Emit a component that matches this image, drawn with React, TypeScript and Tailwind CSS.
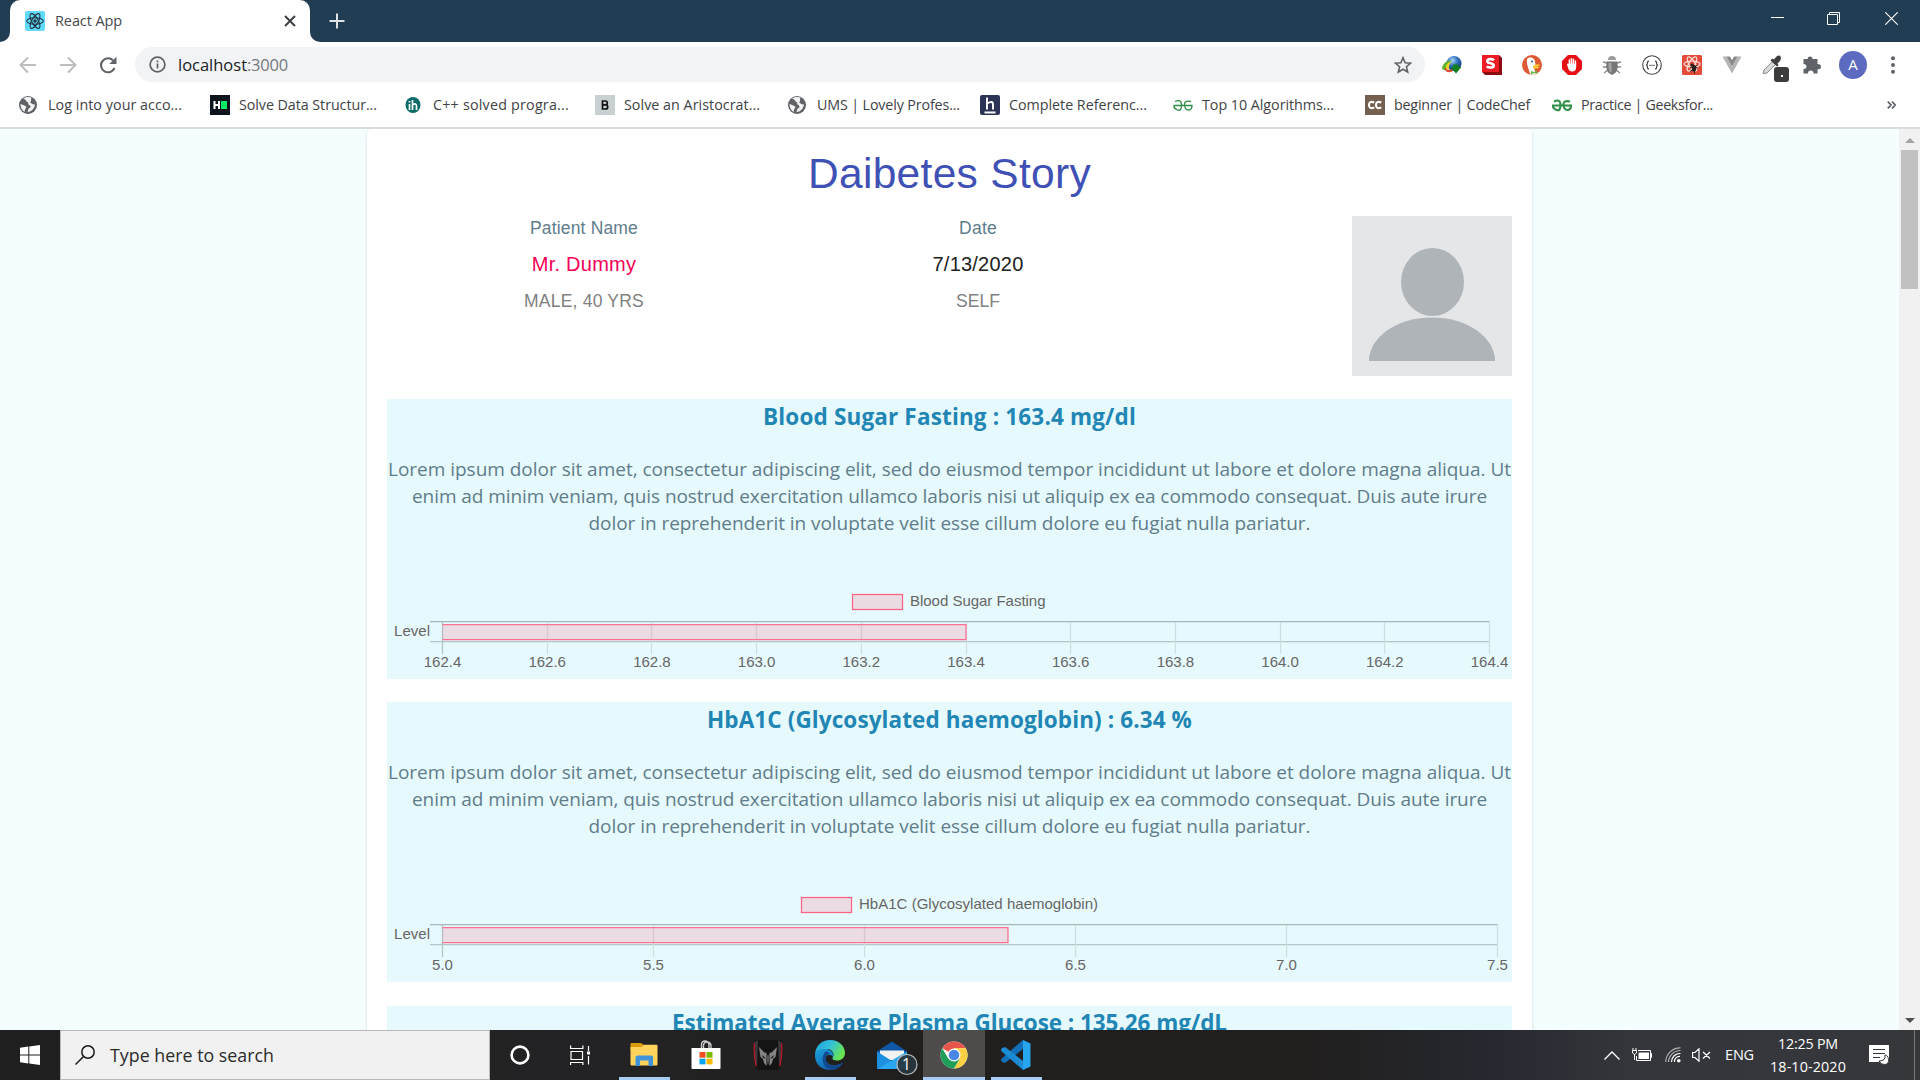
import React, { useLayoutEffect, useRef } from "react";

const UI = "font-['Open_Sans','Noto_Sans',sans-serif]";
const ARIAL = "font-['Liberation_Sans',Arial,sans-serif]";

/* One line of text whose tracking is adjusted so it spans exactly `w` pixels. */
function Fit({ w, className = "", children }: { w: number; className?: string; children: string }) {
  const ref = useRef<HTMLSpanElement>(null);
  useLayoutEffect(() => {
    const el = ref.current;
    if (!el) return;
    el.style.letterSpacing = "0px";
    const natural = el.getBoundingClientRect().width;
    el.style.letterSpacing = `${(w - natural) / children.length}px`;
  }, [w, children]);
  return (
    <span ref={ref} className={`inline-block whitespace-nowrap ${className}`}>
      {children}
    </span>
  );
}

function ReactMark({ stroke, className }: { stroke: string; className: string }) {
  return (
    <svg viewBox="0 0 20 20" className={className} fill="none" stroke={stroke}>
      <ellipse cx="10" cy="10" rx="8.3" ry="3.2" strokeWidth="1.1" />
      <ellipse cx="10" cy="10" rx="8.3" ry="3.2" strokeWidth="1.1" transform="rotate(60 10 10)" />
      <ellipse cx="10" cy="10" rx="8.3" ry="3.2" strokeWidth="1.1" transform="rotate(120 10 10)" />
      <circle cx="10" cy="10" r="1.7" fill={stroke} stroke="none" />
    </svg>
  );
}

function TitleBar() {
  return (
    <div className="flex h-[42px] bg-[#213d54]">
      <div className="flex w-[320px] items-end">
        <svg viewBox="0 0 10 10" className="h-[10px] w-[10px] fill-white"><path d="M10 0V10H0A10 10 0 0 0 10 0Z" /></svg>
        <div className="flex h-[42px] w-[300px] items-center rounded-t-[10px] bg-white pl-[15px]">
          <span className="flex h-5 w-5 items-center justify-center rounded-[2px] bg-[#61dafb]">
            <ReactMark stroke="#20303c" className="h-5 w-5" />
          </span>
          <Fit w={67} className={`ml-[10px] text-[14.5px] text-[#45494d] ${UI}`}>React App</Fit>
          <svg viewBox="0 0 12 12" className="ml-[162px] h-3 w-3" stroke="#3c4043" strokeWidth="2"><path d="M1 1L11 11M11 1L1 11" /></svg>
        </div>
        <svg viewBox="0 0 10 10" className="h-[10px] w-[10px] fill-white"><path d="M0 0V10H10A10 10 0 0 1 0 0Z" /></svg>
      </div>
      <svg viewBox="0 0 16 16" className="ml-[9px] mt-[13px] h-4 w-4" stroke="#dfe3e6" strokeWidth="2"><path d="M8 .5V15.5M.5 8H15.5" /></svg>
      <div className="ml-auto flex pt-[12px]">
        <svg viewBox="0 0 13 13" className="mr-[43px] h-[13px] w-[13px]" stroke="#fff" strokeWidth="1"><path d="M0 5.5H13" /></svg>
        <svg viewBox="0 0 13 13" className="mr-[45px] h-[13px] w-[13px]" fill="none" stroke="#fff" strokeWidth="1"><path d="M.5 2.5H10.5V12.5H.5ZM2.5 2.5V.5H12.5V10.5H10.5" /></svg>
        <svg viewBox="0 0 13 13" className="mr-[22px] h-[13px] w-[13px]" stroke="#fff" strokeWidth="1.1"><path d="M.3 .3L12.7 12.7M12.7 .3L.3 12.7" /></svg>
      </div>
    </div>
  );
}

const EXTENSIONS: React.ReactNode[] = [
  <>
    <defs>
      <radialGradient id="idmGlobe" cx=".4" cy=".3" r=".7"><stop offset="0" stopColor="#a8d8f8" /><stop offset=".5" stopColor="#2f6fc0" /><stop offset="1" stopColor="#143a78" /></radialGradient>
    </defs>
    <circle cx="12" cy="8.500" r="7.5" fill="url(#idmGlobe)" />
    <path d="M0 13C1 8 5 5 10 5.500C6 7 4 10 4.500 14.500C2.500 15.500 0 15 0 13Z" fill="#5cb531" />
    <path d="M4 14C3.500 9.500 6 7 10 6.500C7.500 8.500 6.500 11 7 14Z" fill="#f5d21d" />
    <path d="M2.500 14C4 17.500 8 18 11 16L9 14C7 15.500 5 15 4 13Z" fill="#e34a2a" />
    <path d="M8.500 12H11V9.500H16.500V12H19.500L14 18.500Z" fill="#13801c" />
  </>,
  <>
    <path d="M0 0H17L20 3V20H3L0 17Z" fill="#8c0d10" />
    <rect width="17" height="17" fill="#ec1c24" />
    <path d="M12 5.2C11 3.9 5.3 3.3 5.3 6.2C5.3 9.2 11.7 7.4 11.7 10.4C11.7 13.4 6 12.8 4.8 11.2" fill="none" stroke="#fff" strokeWidth="2.6" />
  </>,
  <>
    <circle cx="10" cy="10" r="10" fill="#de5833" />
    <path d="M5 4C8 1 13 3 13 7C14 9 13 11 12 13L14 19C11 20 9 20 8 19C7 14 4 9 5 4Z" fill="#fff" />
    <circle cx="10" cy="6.5" r="1" fill="#2d4f8e" />
    <path d="M11 11C14 9 17 9 18 10L15 11.5L18 12C16 14 13 14 11 13Z" fill="#fc3" />
    <path d="M9 16L12 17L15 15.5V19L12 18L9 19.5Z" fill="#67bd47" />
  </>,
  <>
    <path d="M6 0H14L20 6V14L14 20H6L0 14V6Z" fill="#e60f13" />
    <path d="M5 9.5Q5 8.6 5.8 8.6T6.6 9.5V5Q6.6 4.2 7.3 4.2T8.1 5V8.5H8.6V3.8Q8.6 3 9.4 3T10.2 3.8V8.5H10.7V4.3Q10.7 3.6 11.4 3.6T12.2 4.3V9H12.7V6Q12.7 5.3 13.4 5.3T14.2 6V12Q14.2 16.5 10 16.5Q7.5 16.5 6.4 14Z" fill="#fff" />
  </>,
  <>
    <path d="M1 7L5 8M15 8L19 7M1 12H19M2 18L6 15M18 18L14 15" stroke="#8b8b8b" strokeWidth="1.4" />
    <path d="M6 5Q6 1 10 1T14 5Z" fill="#9b9b9b" />
    <path d="M4.5 6.5H15.5Q17 18 10 20Q3 18 4.5 6.5Z" fill="#777" />
    <path d="M6.5 8H9.5V18Q6 16 6.5 8Z" fill="#a5a5a5" />
  </>,
  <>
    <circle cx="10" cy="10" r="9.3" fill="#fff" stroke="#444" strokeWidth="1.1" />
    <path d="M7 6.2Q5.4 6.2 5.4 8T4.2 10Q5.4 10 5.4 12T7 13.8M13 6.2Q14.6 6.2 14.6 8T15.8 10Q14.6 10 14.6 12T13 13.8" fill="none" stroke="#444" strokeWidth="1.3" />
    <path d="M7.4 10.3H8.6M9.4 10.3H10.6M11.4 10.3H12.6" stroke="#444" strokeWidth="1.2" />
  </>,
  <>
    <rect width="20" height="20" rx="1.5" fill="#e34a38" />
    <g fill="none" stroke="#f6dcd8" strokeWidth="1.2">
      <ellipse cx="10" cy="9" rx="8" ry="3" />
      <ellipse cx="10" cy="9" rx="8" ry="3" transform="rotate(60 10 9)" />
      <ellipse cx="10" cy="9" rx="8" ry="3" transform="rotate(120 10 9)" />
    </g>
    <path d="M10 9L15.500 13.500M8 12.500L15.500 10.500M8 16.500L14 13M12.500 18.500L12.500 12" stroke="#221" strokeWidth="1" />
    <ellipse cx="12" cy="13.500" rx="2.200" ry="3.200" fill="#2b1b1a" />
    <circle cx="10" cy="10" r="1.600" fill="#2b1b1a" />
  </>,
  <>
    <path d="M.5 1.5H4.3L10 11.5L15.700 1.500H19.5L10 18.500Z" fill="#b4b4b4" />
    <path d="M4.300 1.500H8L10 5L12 1.500H15.700L10 11.500Z" fill="#8a8a8a" />
  </>,
  <>
    <path d="M1 18.500L2 15L10.500 6.500L13.500 9.500L5 18Z" fill="#d5d8d8" stroke="#8c8f8f" strokeWidth="1" />
    <path d="M10 3.500L12 4.500L14.500 1.500Q17.500 -.5 18.500 1.500T18 6L15.500 8.500L16.500 10.500L15 11.500L8.500 5.500Z" fill="#3d3d3d" />
  </>,
  <path d="M8 1.500Q10.500 1.500 10.500 4H15.500V9Q19 9 19 11.700T15.500 14.200V18.500H11.500Q11.500 15.500 8.700 15.500T6 18.500H1.500V14Q4.500 14 4.500 11.500T1.500 9V4H5.700Q5.500 1.500 8 1.500Z" fill="#5f6368" />,
];

function Toolbar() {
  return (
    <div className="flex h-[45px] items-center bg-white">
      <svg viewBox="0 0 18 18" className="ml-[19px] h-[18px] w-[18px]" fill="none" stroke="#bcbec0" strokeWidth="2"><path d="M17 9H2M9 1.500L1.500 9L9 16.500" /></svg>
      <svg viewBox="0 0 18 18" className="ml-[22px] h-[18px] w-[18px]" fill="none" stroke="#bcbec0" strokeWidth="2"><path d="M1 9H16M9 1.500L16.500 9L9 16.500" /></svg>
      <svg viewBox="0 0 18 18" className="ml-[22px] h-[18px] w-[18px]" fill="none" stroke="#5f6368" strokeWidth="2.100"><path d="M15.500 12A7 7 0 1 1 14 4.300" /><path d="M17.500 .8V8H10.300Z" fill="#5f6368" stroke="none" /></svg>
      <div className="ml-[18px] flex h-[35px] w-[1290px] items-center rounded-full bg-[#f1f3f4] pl-[14px]">
        <svg viewBox="0 0 18 18" className="h-[17px] w-[17px]" fill="none" stroke="#5f6368" strokeWidth="1.800"><circle cx="9" cy="9" r="7.800" /><path d="M9 8V13.200M9 4.700V6.500" /></svg>
        <Fit w={69} className={`ml-[12px] mt-px text-[16.500px] text-[#202124] ${UI}`}>localhost</Fit>
        <Fit w={41} className={`mt-px text-[16.500px] text-[#75797d] ${UI}`}>:3000</Fit>
        <svg viewBox="0 0 18 18" className="ml-[1106px] h-[18px] w-[18px]" fill="none" stroke="#5f6368" strokeWidth="1.600"><path d="M9 1.700L11.100 6.700L16.600 7.100L12.400 10.700L13.700 16L9 13.200L4.300 16L5.600 10.700L1.400 7.100L6.900 6.700Z" /></svg>
      </div>
      <div className="ml-[17px] flex items-center gap-[20px]">
        {EXTENSIONS.map((art, i) => (
          <span key={i} className="relative">
            <svg viewBox="0 0 20 20" className="block h-5 w-5">{art}</svg>
            {i === 8 && (
              <span className="absolute left-[12px] top-[12px] flex h-[15px] w-[15px] items-center justify-center rounded-[3px] bg-[#3c3c3c]">
                <span className="mt-[4px] h-[2px] w-[2px] bg-white" />
              </span>
            )}
          </span>
        ))}
      </div>
      <span className={`ml-[17px] flex h-7 w-7 items-center justify-center rounded-full bg-[#5c6bc0] text-[15px] text-white ${UI}`}>A</span>
      <svg viewBox="0 0 4 18" className="ml-[24px] h-[18px] w-[4px] fill-[#5f6368]"><circle cx="2" cy="2.300" r="2" /><circle cx="2" cy="9" r="2" /><circle cx="2" cy="15.700" r="2" /></svg>
    </div>
  );
}

const globe = (
  <>
    <circle cx="9" cy="10" r="9" fill="#5f6368" />
    <path d="M4 3.500C8 5 7 7 9.500 7.500C8 10 12 9.500 11.500 12.500C10 13 9 14 8.500 17C12 17 15.500 13.500 16 9.500C13.500 10 12.500 8 11 7.500C13 6 11.500 3.500 12.500 2.500C9.500 1.500 6 2 4 3.500Z" fill="#fff" opacity=".92" />
    <path d="M1.500 9C4 10 7 10.500 7.500 12.500C6 13.500 6 15 5.500 17C3 15.500 1.500 12.500 1.500 9Z" fill="#fff" opacity=".92" />
  </>
);
const gfg = (w: number) => (
  <path d="M2 6.500Q8.500 3.500 8.500 10T4.500 15T1 10.500H19Q19 15 15.500 15T11.500 10T18 6.500" fill="none" stroke="#2f8d46" strokeWidth={w} />
);
const BOOKMARKS: { x: string; w: number; label: string; art: React.ReactNode }[] = [
  { x: "w-[191px]", w: 134, label: "Log into your acco...", art: globe },
  { x: "w-[194px]", w: 138, label: "Solve Data Structur...", art: <><rect width="20" height="20" fill="#0e141e" /><path d="M4.500 6V14M9 6V14M4.500 10H9" stroke="#fff" strokeWidth="2" /><rect x="11" y="6" width="6" height="8" fill="#00ea64" /></> },
  { x: "w-[191px]", w: 136, label: "C++ solved progra...", art: <><ellipse cx="9" cy="10" rx="7.500" ry="8" fill="#0b6b68" /><path d="M5.500 15V9M5.500 6V7.500M8.500 15V5M8.500 10Q12.500 7.500 12.500 11V15" fill="none" stroke="#fff" strokeWidth="1.700" /></> },
  { x: "w-[193px]", w: 136, label: "Solve an Aristocrat...", art: <><rect width="20" height="20" fill="#c8d0d2" /><path d="M7.500 6V14H10.500Q12.700 14 12.700 12T10.700 9.900H8H10.300Q12.300 9.900 12.300 8T10.500 6Z" fill="none" stroke="#111" strokeWidth="1.700" /></> },
  { x: "w-[192px]", w: 143, label: "UMS | Lovely Profes...", art: globe },
  { x: "w-[193px]", w: 138, label: "Complete Referenc...", art: <><rect width="20" height="20" rx="2" fill="#2b3454" /><path d="M7 2.500V14.500M7 8.500Q13 5 13 9.500V14.500M4.500 17.500H15.500" fill="none" stroke="#fff" strokeWidth="1.900" /></> },
  { x: "w-[192px]", w: 132, label: "Top 10 Algorithms...", art: gfg(1.3) },
  { x: "w-[187px]", w: 136, label: "beginner | CodeChef", art: <><rect width="20" height="20" fill="#75604f" /><path d="M9.300 7.500Q4 5.500 4 10T9.300 12.500M16.300 7.500Q11 5.500 11 10T16.300 12.500" fill="none" stroke="#fff" strokeWidth="2.200" /></> },
  { x: "w-[192px]", w: 132, label: "Practice | Geeksfor...", art: gfg(2.100) },
];

function BookmarkBar() {
  return (
    <div className="flex h-[42px] items-center border-b-2 border-[#dadce0] bg-white pb-[4px] pl-[19px]">
      {BOOKMARKS.map((b) => (
        <div key={b.label} className={`flex shrink-0 items-center ${b.x}`}>
          <svg viewBox="0 0 20 20" className="h-5 w-5">{b.art}</svg>
          <Fit w={b.w} className={`ml-[9px] text-[14.300px] leading-5 text-[#3f4347] ${UI}`}>{b.label}</Fit>
        </div>
      ))}
      <svg viewBox="0 0 9 8" className="ml-[143px] h-[8px] w-[9px]" fill="none" stroke="#5f6368" strokeWidth="1.700"><path d="M.7 .7L4 4L.7 7.300M5 .7L8.300 4L5 7.300" /></svg>
    </div>
  );
}

interface Chart {
  label: string;
  labelWidth: number;
  legendX: number;
  ticks: string[];
  end: number;
  value: number;
}

interface Metric {
  title: string;
  titleWidth: number;
  chart?: Chart;
}

const METRICS: Metric[] = [
  {
    title: "Blood Sugar Fasting : 163.4 mg/dl",
    titleWidth: 373,
    chart: { label: "Blood Sugar Fasting", labelWidth: 135.500, legendX: 465.500, ticks: ["162.4", "162.6", "162.8", "163.0", "163.2", "163.4", "163.6", "163.8", "164.0", "164.2", "164.4"], end: 1102.500, value: 0.5 },
  },
  {
    title: "HbA1C (Glycosylated haemoglobin) : 6.34 %",
    titleWidth: 485,
    chart: { label: "HbA1C (Glycosylated haemoglobin)", labelWidth: 239, legendX: 414.500, ticks: ["5.0", "5.5", "6.0", "6.5", "7.0", "7.5"], end: 1110.500, value: 0.536 },
  },
  { title: "Estimated Average Plasma Glucose : 135.26 mg/dL", titleWidth: 555 },
];

function LevelChart({ m }: { m: Chart }) {
  const x0 = 55.500;
  const step = (m.end - x0) / (m.ticks.length - 1);
  const barEnd = x0 + (m.end - x0) * m.value;
  return (
    <svg viewBox="0 0 1125 99" className={`mt-[43px] h-[99px] w-[1125px] shrink-0 text-[15px] ${ARIAL}`} fill="#666">
      <rect x={m.legendX} y="14.500" width="50" height="15" fill="#ff6384" fillOpacity=".2" stroke="#ff6384" strokeWidth="1.250" />
      <text x={m.legendX + 57.500} y="26" textLength={m.labelWidth}>{m.label}</text>
      <text x="7" y="55.500" textLength="36">Level</text>
      <path d={`M43 41.500H${m.end}`} stroke="#a6b8ba" strokeWidth="1.250" />
      <path d={`M43 61.500H${m.end}`} stroke="#b4c6c8" strokeWidth="1.250" />
      {m.ticks.map((t, i) => (
        <g key={t}>
          <path d={`M${Math.floor(x0 + i * step) + 0.500} 42V74`} stroke={i ? "#cfdfe1" : "#b0c3c5"} strokeWidth="1.200" />
          <text x={x0 + i * step} y="87" textAnchor="middle">{t}</text>
        </g>
      ))}
      <rect x={x0} y="44" width={barEnd - x0} height="16" fill="#ff6384" fillOpacity=".2" />
      <path d={`M${x0} 44.500H${barEnd}V59.500H${x0}`} fill="none" stroke="#fb7090" strokeWidth="1.250" />
    </svg>
  );
}

function MetricSection({ m }: { m: Metric }) {
  return (
    <section className="mb-[23.900px] flex h-[279.500px] flex-col items-center bg-[#e6f9fc]">
      <h3 className={`mt-[1.500px] text-[22.500px] font-bold leading-[31px] text-[#1f86b5] ${UI}`}>
        <Fit w={m.titleWidth}>{m.title}</Fit>
      </h3>
      {m.chart && (
        <>
          <div className={`mt-[24.500px] flex flex-col items-center text-[19px] leading-[27px] text-[#607d8b] ${UI}`}>
            <Fit w={1123}>Lorem ipsum dolor sit amet, consectetur adipiscing elit, sed do eiusmod tempor incididunt ut labore et dolore magna aliqua. Ut</Fit>
            <Fit w={1075}>enim ad minim veniam, quis nostrud exercitation ullamco laboris nisi ut aliquip ex ea commodo consequat. Duis aute irure</Fit>
            <Fit w={722}>dolor in reprehenderit in voluptate velit esse cillum dolore eu fugiat nulla pariatur.</Fit>
          </div>
          <LevelChart m={m.chart} />
        </>
      )}
    </section>
  );
}

function Page() {
  return (
    <div className="flex h-[901px] overflow-hidden bg-[#f5feff]">
      <main className="ml-[367px] h-[1300px] w-[1165px] shrink-0 rounded-[5px] bg-white px-5 shadow-[0_1px_3px_rgba(0,0,0,0.17)]">
        <h1 className={`h-[87px] pt-[19px] text-center text-[42.500px] leading-[52px] text-[#3f51b5] ${ARIAL}`}>
          <Fit w={283}>Daibetes Story</Fit>
        </h1>
        <div className={`flex h-[183px] ${ARIAL}`}>
          <div className="flex w-[394px] flex-col items-center">
            <Fit w={108} className="text-[17.500px] leading-[24px] text-[#607d8b]">Patient Name</Fit>
            <Fit w={104.500} className="mt-[10.500px] text-[20px] leading-[26px] text-[#f50057]">Mr. Dummy</Fit>
            <Fit w={120} className="mt-[12px] text-[17.500px] leading-[24px] text-[#808080]">MALE, 40 YRS</Fit>
          </div>
          <div className="flex w-[394px] flex-col items-center">
            <Fit w={38} className="text-[17.500px] leading-[24px] text-[#607d8b]">Date</Fit>
            <Fit w={91} className="mt-[10.500px] text-[20px] leading-[26px] text-[#212121]">7/13/2020</Fit>
            <Fit w={44} className="mt-[12px] text-[17.500px] leading-[24px] text-[#808080]">SELF</Fit>
          </div>
          <svg viewBox="0 0 160 160" className="ml-auto h-40 w-40 bg-[#e4e6e8]" fill="#aeb4b8">
            <ellipse cx="80.500" cy="66" rx="31.500" ry="34" />
            <path d="M17 145A63 43.500 0 0 1 143 145Z" />
          </svg>
        </div>
        {METRICS.map((m) => (
          <MetricSection key={m.title} m={m} />
        ))}
      </main>
      <div className="ml-auto flex w-[21px] flex-col items-center bg-[#f1f1f1]">
        <svg viewBox="0 0 10 5" className="mt-[9px] h-[5px] w-[10px] fill-[#a3a3a3]"><path d="M5 0L10 5H0Z" /></svg>
        <div className="mt-[7px] h-[139px] w-[17px] bg-[#c1c1c1]" />
        <svg viewBox="0 0 10 5" className="mb-[7px] mt-auto h-[5px] w-[10px] fill-[#505050]"><path d="M0 0H10L5 5Z" /></svg>
      </div>
    </div>
  );
}

function TaskbarApp({ line = "", active = false, children }: { line?: string; active?: boolean; children: React.ReactNode }) {
  return (
    <div className={`flex h-full w-[62px] flex-col items-center ${active ? "bg-[#4d4c4b]" : ""}`}>
      <svg viewBox="0 0 30 30" className="mt-[10px] h-[30px] w-[30px] overflow-visible">{children}</svg>
      {line && <span className={`mt-auto h-[3px] bg-[#a8cdf5] ${line}`} />}
    </div>
  );
}

function Taskbar() {
  return (
    <div className="flex h-[50px] bg-[linear-gradient(90deg,#1f1f1f_0%,#232325_32%,#211f1e_45%,#211f1e_68%,#262930_78%,#34363b_85%,#36373b_100%)]">
      <div className="flex w-[60px] items-center justify-center">
        <svg viewBox="0 0 20 20" className="h-5 w-5 fill-white"><path d="M0 2.800L8.300 1.600V9.500H0ZM9.300 1.500L20 0V9.500H9.300ZM0 10.500H8.300V18.400L0 17.200ZM9.300 10.500H20V20L9.300 18.500Z" /></svg>
      </div>
      <div className="flex w-[430px] items-center border border-[#b9b9b9] bg-[#f1f1f1] pl-[14px]">
        <svg viewBox="0 0 20 20" className="h-5 w-5" fill="none" stroke="#1b1b1b" strokeWidth="1.500"><circle cx="13" cy="7" r="6.200" /><path d="M8.500 11.500L.5 19.500" /></svg>
        <Fit w={164} className={`ml-[15px] text-[17.800px] text-[#2b2b2b] ${UI}`}>Type here to search</Fit>
      </div>
      <div className="flex w-[60px] items-center justify-center">
        <svg viewBox="0 0 20 20" className="h-5 w-5" fill="none" stroke="#fff" strokeWidth="2.600"><circle cx="10" cy="10" r="8.400" /></svg>
      </div>
      <div className="flex w-[60px] items-center justify-center">
        <svg viewBox="0 0 20 20" className="h-5 w-5" fill="none" stroke="#fff" strokeWidth="1.200"><path d="M1 6.500H12.500V14.500H1ZM.6 .5V3.500H12.900V.5M.6 20V17.500H12.900V20M18.500 1V6M18.500 11V19.500" /><path d="M17 6.500H20V9.500H17Z" fill="#fff" stroke="none" /></svg>
      </div>
      <div className="ml-[3px] flex">
        <TaskbarApp line="w-[51px]">
          <path d="M1.500 4Q1.500 3 2.500 3H12L15 5V10H1.500Z" fill="#d99a0b" />
          <path d="M1.500 7H12.500L15 4.800H27.500Q28.500 4.800 28.500 5.800V24.500Q28.500 25.500 27.500 25.500H2.500Q1.500 25.500 1.500 24.500Z" fill="#ffd35c" />
          <path d="M6.500 26V17.500Q6.500 15.500 8.500 15.500H22Q24 15.500 24 17.500V26H19.500V20.500H11V26Z" fill="#3f94d9" />
        </TaskbarApp>
        <TaskbarApp>
          <path d="M10.500 8V5Q10.500 1 14 1T18 5V8M12.500 8V5Q13 2 16 2T20 5V8" fill="none" stroke="#c9c9c9" strokeWidth="1.400" />
          <path d="M.5 8H29.500V28Q29.500 29 28.500 29H1.500Q.5 29 .5 28Z" fill="#fff" />
          <rect x="8.500" y="12" width="6" height="5.700" fill="#f25022" /><rect x="15.500" y="12" width="6" height="5.700" fill="#7fba00" />
          <rect x="8.500" y="18.700" width="6" height="5.700" fill="#00a4ef" /><rect x="15.500" y="18.700" width="6" height="5.700" fill="#ffb900" />
        </TaskbarApp>
        <TaskbarApp>
          <path d="M1 0H29V22L26 30H4L1 22Z" fill="#151414" />
          <path d="M5 0L1.500 2V20L4 28ZM25 0L28.500 2V20L26 28Z" fill="#3a3838" />
          <path d="M1.500 3Q.5 14 3 26M28.500 3Q29.500 14 27 26" fill="none" stroke="#b5162a" strokeWidth="1.300" />
          <path d="M6 7L12 13L13.500 12.500V26L11 23L10 19L7.500 17ZM24 7L18 13L16.500 12.500V26L19 23L20 19L22.500 17Z" fill="#858585" />
          <path d="M9 15L13 18.500L10 18ZM21 15L17 18.500L20 18Z" fill="#1c1b1b" />
          <path d="M13.500 14L15 16L16.500 14L15.500 24H14.500Z" fill="#5c5c5c" />
        </TaskbarApp>
        <TaskbarApp line="w-[51px]">
          <defs>
            <linearGradient id="edgeTop" x1="0" y1="0" x2="1" y2=".4"><stop offset="0" stopColor="#1e9ee0" /><stop offset=".55" stopColor="#35c1d8" /><stop offset="1" stopColor="#67e452" /></linearGradient>
            <linearGradient id="edgeLow" x1="0" y1="0" x2=".8" y2="1"><stop offset="0" stopColor="#1da1dd" /><stop offset="1" stopColor="#0e5aa7" /></linearGradient>
          </defs>
          <path d="M0 14C1 5 7 0 15 0C24 0 30 6 30 13C30 18 26 20.500 22 20.500C18.500 20.500 17 19 17.500 18C20 15 18 9 12 9C6 9 1 11 0 14Z" fill="url(#edgeTop)" />
          <path d="M0 15C0 10 6 8.500 11 9C16 9.500 19 13 18 17C16 14 12 14 11 17C9 25 20 28 28 22.500C24 29 18 30.500 14 30C5 29.500 0 23 0 15Z" fill="url(#edgeLow)" />
          <path d="M10.500 11.500C5 18 8 27 14.500 30C22 30.500 26 26 28 22.500C19 28 9 25 11 17C11.500 15 13 14 14.500 14C13.500 12 12 11.500 10.500 11.500Z" fill="#12488f" />
        </TaskbarApp>
        <TaskbarApp>
          <path d="M0 11.500L15 1.500L30 11.500V17H0Z" fill="#0f56a6" />
          <path d="M3 10.500H27V20H3Z" fill="#f2f2f2" />
          <path d="M0 11.500L15 21L0 29Z" fill="#1d8fe0" />
          <path d="M30 11.500L0 29H30Z" fill="#2aa7f0" />
          <circle cx="30" cy="24.500" r="10" fill="#28363d" fillOpacity=".93" stroke="#b6babc" strokeWidth="1.200" />
          <text x="29.500" y="30" textAnchor="middle" fill="#fff" className={`text-[15.500px] ${UI}`}>1</text>
        </TaskbarApp>
        <TaskbarApp active line="w-[62px]">
          <circle cx="15" cy="15" r="13.500" fill="#fff" />
          <path d="M15 15L3.300 8.250A13.500 13.500 0 0 1 26.700 8.250H15Z" fill="#e8554a" />
          <path d="M15 8.250H26.700A13.500 13.500 0 0 1 15 28.500L20.800 18.400Z" fill="#fdd045" />
          <path d="M15 28.500A13.500 13.500 0 0 1 3.300 8.250L9.200 18.400L20.800 18.400Z" fill="#1f9e59" />
          <circle cx="15" cy="15" r="6.500" fill="#fff" /><circle cx="15" cy="15" r="5.300" fill="#4a86e8" />
        </TaskbarApp>
        <TaskbarApp line="w-[51px]">
          <path d="M22 0L29.500 3.500V26.500L22 30Z" fill="#27a5ee" />
          <path d="M22 0V9L4 23L1.200 22L0 20.500L.2 19Z" fill="#1170b8" />
          <path d="M22 30V21L4 7L1.200 8L0 9.500L.2 11Z" fill="#1b8bd3" />
        </TaskbarApp>
      </div>
      <div className="ml-auto flex items-center">
        <svg viewBox="0 0 16 9" className="h-[9px] w-[16px]" fill="none" stroke="#fff" strokeWidth="1.300"><path d="M.5 8.500L8 1L15.500 8.500" /></svg>
        <svg viewBox="0 0 20 14" className="ml-[12px] h-[14px] w-[20px]" fill="none" stroke="#fff" strokeWidth="1"><path d="M6 2.500H18.500V12.500H4.500V8M18.500 5.500H19.500V9.500H18.500M1 0V2M4 0V2M.5 2.500H4.500V5L2.500 6.500L.5 5ZM2.500 6.500V12" /><path d="M6.500 4.500H17V11H6.500Z" fill="#fff" stroke="none" /></svg>
        <svg viewBox="0 0 16 16" className="ml-[13px] h-[16px] w-[16px]" fill="none" stroke="#fff" strokeWidth="1.200"><path d="M9.500 15A5 5 0 0 1 15 9.500" /><path d="M6.500 15A8.500 8.500 0 0 1 15.500 6.500" /><path d="M3.500 15A12 12 0 0 1 15.500 3.500M.7 15A14.500 14.500 0 0 1 15.500 .8" opacity=".6" /><circle cx="13.800" cy="13.800" r="1.800" fill="#fff" stroke="none" /></svg>
        <svg viewBox="0 0 19 14" className="ml-[11px] h-[14px] w-[19px]" fill="none" stroke="#fff" strokeWidth="1.200"><path d="M.6 4.500H3L7 .8V13.200L3 9.500H.6ZM11 4L18 10.500M18 4L11 10.500" /></svg>
        <Fit w={29} className={`ml-[14px] text-[14.500px] text-white ${UI}`}>ENG</Fit>
        <div className={`ml-[16px] mr-px flex w-[76px] flex-col items-center text-[14.300px] leading-[23px] text-white ${UI}`}>
          <Fit w={60}>12:25 PM</Fit>
          <Fit w={76}>18-10-2020</Fit>
        </div>
        <svg viewBox="0 0 20 20" className="ml-[22px] h-5 w-5"><path d="M0 0H20V17H0Z" fill="#fff" /><path d="M4 4.500H16M4 8.500H16M4 12.500H11" stroke="#36373b" strokeWidth="1.200" /><path d="M16 10Q17 16 10 16Q12 20 16 19.500T19.500 14.500T16 10Z" fill="#fff" stroke="#36373b" strokeWidth="1" /></svg>
        <span className="ml-[25px] mr-[5px] h-[50px] w-px bg-[#77787b]" />
      </div>
    </div>
  );
}

export default function App() {
  return (
    <div className="flex h-[1080px] w-[1920px] flex-col overflow-hidden">
      <TitleBar />
      <Toolbar />
      <BookmarkBar />
      <Page />
      <Taskbar />
    </div>
  );
}
